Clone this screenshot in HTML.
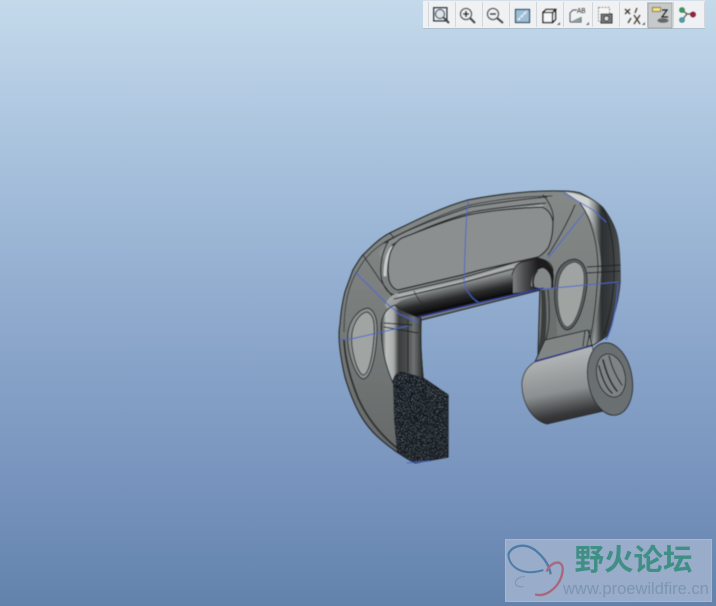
<!DOCTYPE html>
<html lang="zh"><head><meta charset="utf-8"><title>Pro/E</title>
<style>
html,body{margin:0;padding:0;width:716px;height:606px;overflow:hidden;background:#6484ae}
svg{display:block}
</style></head><body>
<svg width="716" height="606" viewBox="0 0 716 606" xmlns="http://www.w3.org/2000/svg">
<defs>
<linearGradient id="bg" x1="0" y1="0" x2="0" y2="1">
<stop offset="0" stop-color="#c4daeb"/><stop offset=".3" stop-color="#a3bdda"/><stop offset=".55" stop-color="#8ca7cb"/><stop offset=".78" stop-color="#7995be"/><stop offset="1" stop-color="#6282ac"/>
</linearGradient>
<linearGradient id="face" gradientUnits="userSpaceOnUse" x1="0" y1="190" x2="0" y2="460">
<stop offset="0" stop-color="#858a89"/><stop offset=".5" stop-color="#777c7b"/><stop offset="1" stop-color="#646867"/>
</linearGradient>
<linearGradient id="band" gradientUnits="userSpaceOnUse" x1="462" y1="272" x2="470" y2="308">
<stop offset="0" stop-color="#a9adad"/><stop offset=".3" stop-color="#8b8f8f"/><stop offset=".62" stop-color="#2c2d2e"/><stop offset=".85" stop-color="#0c0c0d"/><stop offset="1" stop-color="#2a2b2d"/>
</linearGradient>
<linearGradient id="bandL" gradientUnits="userSpaceOnUse" x1="385" y1="0" x2="445" y2="0">
<stop offset="0" stop-color="#a5a9a9" stop-opacity=".9"/><stop offset="1" stop-color="#a5a9a9" stop-opacity="0"/>
</linearGradient>
<linearGradient id="bandR" gradientUnits="userSpaceOnUse" x1="510" y1="0" x2="538" y2="0">
<stop offset="0" stop-color="#8a8e8e"/><stop offset=".5" stop-color="#4c4e4f"/><stop offset="1" stop-color="#1c1c1d"/>
</linearGradient>
<linearGradient id="leg" gradientUnits="userSpaceOnUse" x1="381" y1="0" x2="423" y2="0">
<stop offset="0" stop-color="#3a3d3d"/><stop offset=".12" stop-color="#babebd"/><stop offset=".3" stop-color="#a8acab"/><stop offset=".42" stop-color="#3c3e3e"/><stop offset=".62" stop-color="#4a4d4d"/><stop offset=".78" stop-color="#6e7272"/><stop offset=".95" stop-color="#3a3c3c"/><stop offset="1" stop-color="#222"/>
</linearGradient>
<linearGradient id="rimR" gradientUnits="userSpaceOnUse" x1="588" y1="250" x2="620" y2="250">
<stop offset="0" stop-color="#cfd3d2"/><stop offset=".22" stop-color="#8a8e8e"/><stop offset=".42" stop-color="#2c2f30"/><stop offset=".75" stop-color="#3b3e3f"/><stop offset="1" stop-color="#4a4e4f"/>
</linearGradient>
<linearGradient id="cyl" gradientUnits="userSpaceOnUse" x1="563" y1="353" x2="576" y2="420">
<stop offset="0" stop-color="#b2b6b7"/><stop offset=".55" stop-color="#8b8f90"/><stop offset=".88" stop-color="#38393b"/><stop offset="1" stop-color="#2a2b2d"/>
</linearGradient>
<filter id="noise" x="0" y="0" width="100%" height="100%">
<feTurbulence type="fractalNoise" baseFrequency="1.1" numOctaves="2" seed="4"/>
<feColorMatrix values="0 0 0 0 .36  0 0 0 0 .43  0 0 0 0 .5  2.6 0 0 0 -1.55"/>
<feComposite in2="SourceGraphic" operator="in"/>
<feMerge><feMergeNode in="SourceGraphic"/><feMergeNode/></feMerge>
</filter>
<filter id="s"><feGaussianBlur stdDeviation=".4"/></filter>
</defs>
<rect width="716" height="606" fill="url(#bg)"/>

<g filter="url(#s)" stroke-linejoin="round" stroke-linecap="round">
<!-- silhouette -->
<path d="M415 463C400 455 388 446 378 437C365 425 355 410 345 377C339 350 338 335 340 325C341 310 343 300 345 292L353 270C358 262 360 258 363 255C372 246 380 238 390 233C415 221 440 208 468 200C500 194 530 191 553 191C565 191 572 191 580 193C590 198 598 203 603 208C612 220 617 232 618 242C620 255 620 270 620 282C619 295 616 308 613 318C611 325 609 330 607 336L590 347L538 357L540 290L421 320C420 340 421 355 423 378L448 395V457Z" fill="url(#face)" stroke="#2a2d2e" stroke-width="1.300"/>
<path d="M344 332C344 300 350 282 358 270C368 252 382 243 394 237C420 224 445 213 470 205C500 199 530 196 552 196" fill="none" stroke="#3a3d3e" stroke-width="1"/>
<path d="M344 340C345 360 350 378 358 398C368 420 382 436 397 448" fill="none" stroke="#2e3132" stroke-width="2"/>

<!-- right dark rim with bright tube -->
<path d="M565 192C585 194 598 203 603 208C612 220 617 232 618 242C620 255 620 270 620 282C619 295 616 308 613 318C611 325 609 330 607 336L592 345C596 325 600 300 601 275C602 250 596 225 582 205C576 199 570 195 565 192Z" fill="url(#rimR)"/>
<path d="M603 210C611 225 614 245 614 270C614 295 610 315 604 335" fill="none" stroke="#1f2223" stroke-width="1"/>
<path d="M580 203C592 220 598 245 598 270C597 295 594 320 590 340" fill="none" stroke="#26292a" stroke-width="1"/>

<!-- top rim tube -->
<path d="M378 254C384 244 392 238 402 233C425 222 450 212 475 206C500 202 525 199 545 198L548 207C520 209 495 212 470 216C445 222 425 230 404 240C396 245 390 252 388 262Z" fill="#878b8b"/>
<path d="M385 243C395 236 420 224 470 207C500 202 525 199 547 197" fill="none" stroke="#26292a" stroke-width="1.100"/>
<path d="M392 245C410 234 440 221 472 212C500 207 525 205 546 203" fill="none" stroke="#26292a" stroke-width="1.100"/>
<path d="M392 252C408 238 440 225 474 215C500 210 525 208 542 206" fill="none" stroke="#b9bdbd" stroke-width="1.800"/>
<path d="M388 242C382 252 380 265 381 275C382 285 388 295 396 295" fill="none" stroke="#26292a" stroke-width="1.100"/>
<path d="M385 275C385 262 388 252 392 248" fill="none" stroke="#c8cbcb" stroke-width="3"/>

<!-- upper pocket -->
<path d="M388 272C388 262 389 256 391 251C394 244 398 240 402 238C425 229 445 221 468 215C492 210 520 208 542 207C549 210 552 216 553 222C553 232 551 242 548 248C545 252 542 255 538 257L480 270L462 275L398 290C393 289 390 284 389 280Z" fill="#8b8f8f" stroke="#1f2223" stroke-width="1.200"/>

<!-- seams -->
<path d="M363 255L380 280L395 300M543 195C548 200 555 212 553 222M575 205C568 222 556 243 548 255M390 233L394 238" fill="none" stroke="#23262a" stroke-width="1"/>

<!-- lower band -->
<path d="M385 305C388 298 392 295 398 293L462 278L480 273L513 263L538 258L546 272L543 288L480 302L420 317L402 317C396 312 390 308 385 305Z" fill="url(#band)"/>
<path d="M385 305C388 298 392 295 398 293L462 278L480 273L513 263L538 258L540 268L480 281L430 292L402 300C395 304 392 308 390 312Z" fill="url(#bandL)"/>
<path d="M398 293L462 278L513 263L538 257M394 299L462 283L513 269" fill="none" stroke="#23262a" stroke-width="1.100"/>
<path d="M398 296L462 281L513 266" fill="none" stroke="#b5b9b9" stroke-width="1.300"/>
<path d="M414 291C416 296 419 300 422 303" fill="none" stroke="#23262a" stroke-width=".8"/>
<!-- right fillet -->
<path d="M513 273C515 266 518 263 522 262L538 258C548 260 553 266 554 276L553 288L543 289L528 292L513 293Z" fill="url(#bandR)"/>
<path d="M531 286C531 275 536 269 543 268C550 271 552 278 551 288L543 289Z" fill="#85898a"/>
<path d="M537 271C533 276 532 282 534 288" fill="none" stroke="#2b2c2d" stroke-width="2"/>
<path d="M512 275C514 268 517 263 522 262L538 258C548 260 552 264 553 270L553 288" fill="none" stroke="#1f2223" stroke-width="1"/>

<!-- left leg -->
<path d="M381 325C382 315 387 308 395 305C400 310 410 315 421 318C420 340 421 355 423 378L402 372C396 372 393 378 393 383C385 365 381 345 381 325Z" fill="url(#leg)" stroke="#23262a" stroke-width="1"/>
<path d="M384 323L412 325M384 327L418 333M408 320V372" fill="none" stroke="#1e2122" stroke-width="1"/>

<!-- left slot -->
<path d="M348 332C350 320 358 309 368 308C375 310 378 320 377 335C376 355 371 379 363 379C355 377 346 350 348 332Z" fill="#8a8e8d" stroke="#23262a" stroke-width="1"/>
<path d="M352 333C354 322 360 313 367 312C373 314 375 322 374 335C373 353 369 375 363 375C357 373 350 348 352 333Z" fill="#a0a4a3" stroke="#2d3031" stroke-width="1"/>

<!-- right leg -->
<path d="M541 290L553 288C556 300 557 320 557 340L545 340C544 320 542 305 541 290Z" fill="#6b6f6e"/>
<path d="M541 290C542 315 541 340 537 358L544 352C547 330 547 310 545 290Z" fill="#3a3c3d"/>
<path d="M548 290C550 310 550 325 546 340" fill="none" stroke="#23262a" stroke-width="1"/>
<path d="M545 340L588 330L592 345L535 362Z" fill="#818685" stroke="#23262a" stroke-width="1"/>
<path d="M590 330L587 346M585 331L583 346" fill="none" stroke="#23262a" stroke-width="1"/>
<path d="M587 267L620 265M587 273L620 271" fill="none" stroke="#1f2223" stroke-width="1"/>

<!-- right slot -->
<path d="M555 283C556 268 564 260 574 259C584 260 588 270 587 285C585 305 577 329 567 330C558 329 553 303 555 283Z" fill="#5b5e5f" stroke="#23262a" stroke-width="1"/>
<path d="M558 285C559 272 566 263 575 262C583 264 585 272 584 285C582 305 575 326 567 327C560 325 556 303 558 285Z" fill="#9fa3a2" stroke="#3a3d3e" stroke-width=".8"/>

<!-- jaw -->
<path d="M393 383C393 376 398 372 404 372L423 378L448 395V457L415 463L397 452L394 420Z" fill="#171c23" filter="url(#noise)"/>

<!-- cylinder -->
<path d="M535 362L592 346L608 410L547 424C532 420 522 403 522 383C523 373 528 366 535 362Z" fill="url(#cyl)" stroke="#2a2c2e" stroke-width=".8"/>
<path d="M535 361L590 346" stroke="#2a3da0" stroke-width="1.100" fill="none"/>
<ellipse cx="610" cy="379" rx="22" ry="36.500" transform="rotate(-10 610 379)" fill="#6b6f72" stroke="#2d2f31" stroke-width="1"/>
<ellipse cx="611" cy="375.500" rx="14" ry="22" transform="rotate(-14 611 375.500)" fill="#7f8386" stroke="#2b2d2f" stroke-width="1"/>
<path d="M599 366C602 378 606 388 612 393" fill="none" stroke="#2b2d2f" stroke-width="1.500"/>
<path d="M603 360C606 372 611 384 617 391" fill="none" stroke="#2b2d2f" stroke-width="1.700"/>
<path d="M609 356C612 368 617 378 622 385" fill="none" stroke="#33353a" stroke-width="1.300"/>

<!-- blue datum curves -->
<g fill="none" stroke="#4a66c8" stroke-width="1" opacity=".95">
<path d="M468 201C465 230 465 262 464 280C465 290 472 299 478 302"/>
<path d="M355 272L385 302L399 314L418 322"/>
<path d="M340 340L351 339L408 326"/>
<path d="M543 289L618 282"/>
<path d="M548 258L584 213"/>
<path d="M564 193L593 210L606 222"/>
<path d="M618 284C616 310 612 330 606 340"/>
<path d="M419 317L543 288" stroke="#2a3da0" stroke-width="1.300"/>
<path d="M407 463L430 461"/>
</g>
</g>

<!-- watermark -->
<rect x="505.500" y="539.500" width="206" height="62" fill="#99acca" stroke="#a6b7d1" stroke-width="1"/>
<g transform="translate(500,535) scale(.33333)" fill="none" filter="url(#s)">
<path d="M25 60C30 35 70 20 105 45C130 65 148 90 152 118" stroke="#4d7ba8" stroke-width="7"/>
<path d="M25 60C28 95 65 125 130 105" stroke="#4d7ba8" stroke-width="6"/>
<path d="M75 125C40 125 35 160 70 155" stroke="#7f93ad" stroke-width="3"/>
<path d="M140 110C150 80 190 70 188 105C186 150 140 190 105 178" stroke="#a9687c" stroke-width="7"/>
</g>
<text x="574.500" y="570" font-family="'Noto Sans CJK SC',sans-serif" font-weight="700" font-size="29.500" fill="#3f8f85">野火论坛</text>
<text x="563" y="594" font-family="'Liberation Sans',sans-serif" font-size="16.500" fill="#7b95b3">www.proewildfire.cn</text>

<!-- toolbar -->
<rect x="423" y="1" width="282" height="27" fill="#f0f1f3"/>
<rect x="423" y="0" width="282" height="1" fill="#d5dfe9"/>
<rect x="423" y="28" width="282" height="1" fill="#aebfd0"/>
<g stroke="#d3d6da" stroke-width="1">
<path d="M428.500 2V27M455.500 2V27M482.500 2V27M509.500 2V27M536.500 2V27M563.500 2V27M592.500 2V27M619.500 2V27M647.500 2V27M673.500 2V27M704.500 2V27"/>
</g>
<rect x="648" y="3" width="24" height="25" fill="#c6c9c9" stroke="#a2a6a6"/>
<g filter="url(#s)">
<!-- fit -->
<rect x="433.800" y="7.800" width="13" height="13" fill="#eef3f7" stroke="#2c3b4a" stroke-width="1.500"/>
<circle cx="440" cy="14" r="4.500" fill="#dce4ec" stroke="#555" stroke-width="1.300"/>
<path d="M443 17L449 23" stroke="#444" stroke-width="2"/>
<!-- zoom in -->
<circle cx="466" cy="14" r="5.500" fill="#eef2f5" stroke="#555" stroke-width="1.300"/>
<path d="M463 14H469M466 11V17" stroke="#222" stroke-width="1.600"/>
<path d="M470 18L475 23" stroke="#444" stroke-width="2"/>
<!-- zoom out -->
<circle cx="493" cy="14" r="5.500" fill="#eef2f5" stroke="#555" stroke-width="1.300"/>
<path d="M490 14H496" stroke="#222" stroke-width="1.600"/>
<path d="M497 18L503 23" stroke="#444" stroke-width="2"/>
<!-- repaint -->
<rect x="515.500" y="9.500" width="14" height="13" fill="#9dbfd6" stroke="#2f4a60" stroke-width="1.200"/>
<path d="M518 20L527 11" stroke="#eef" stroke-width="1.800" stroke-dasharray="3 1"/>
<!-- cube -->
<path d="M543 12.500H552.500V22.500H543ZM543 12.500L546 9.500H555.500L552.500 12.500M555.500 9.500V19.500L552.500 22.500" fill="#f6f7f8" stroke="#111" stroke-width="1.300"/>
<path d="M557 25L560 25L560 22Z" fill="#666"/>
<!-- saved view -->
<path d="M570 22V13L573 10H577M570 22H581V17" fill="none" stroke="#667" stroke-width="1.200"/>
<path d="M572 21L581 17V21Z" fill="#7f9a84"/>
<text x="577" y="13" font-family="'Liberation Sans',sans-serif" font-size="7.500" fill="#222" textLength="8.500" lengthAdjust="spacingAndGlyphs">AB</text>
<path d="M586 25L589 25L589 22Z" fill="#666"/>
<!-- camera -->
<rect x="598.500" y="7.500" width="11" height="14" fill="#f6f6f6" stroke="#888" stroke-dasharray="2 1"/>
<rect x="601" y="14" width="11" height="9" fill="#777" stroke="#333"/>
<circle cx="606.500" cy="18.500" r="2.500" fill="#ddd" stroke="#222"/>
<!-- datum points -->
<path d="M625 9L630 14M630 9L625 14M637 8L635 13M628 23L631 18M634 15L640 24M640 15L634 24" stroke="#443c32" stroke-width="1.300" fill="none"/>
<path d="M642 25L645 25L645 22Z" fill="#666"/>
<!-- annotations -->
<rect x="652.500" y="7.500" width="8" height="4" fill="#f3e08a" stroke="#8a7f4a"/>
<path d="M662 10H667L662 17H668" stroke="#222" stroke-width="1.200" fill="none"/>
<ellipse cx="663" cy="20.500" rx="5.500" ry="2.300" fill="#666"/>
<!-- spin center -->
<path d="M682 10L687 14L682 20M687 14H693" stroke="#555" stroke-width="1.200" fill="none"/>
<circle cx="682" cy="10" r="2.500" fill="#3e9a5d" stroke="#2c6b40" stroke-width=".6"/>
<circle cx="682" cy="20" r="2.500" fill="#49a2b0" stroke="#2d6f7a" stroke-width=".6"/>
<circle cx="693" cy="14.500" r="2.600" fill="#96233a" stroke="#6d1728" stroke-width=".6"/>
</g>
</svg>
</body></html>
